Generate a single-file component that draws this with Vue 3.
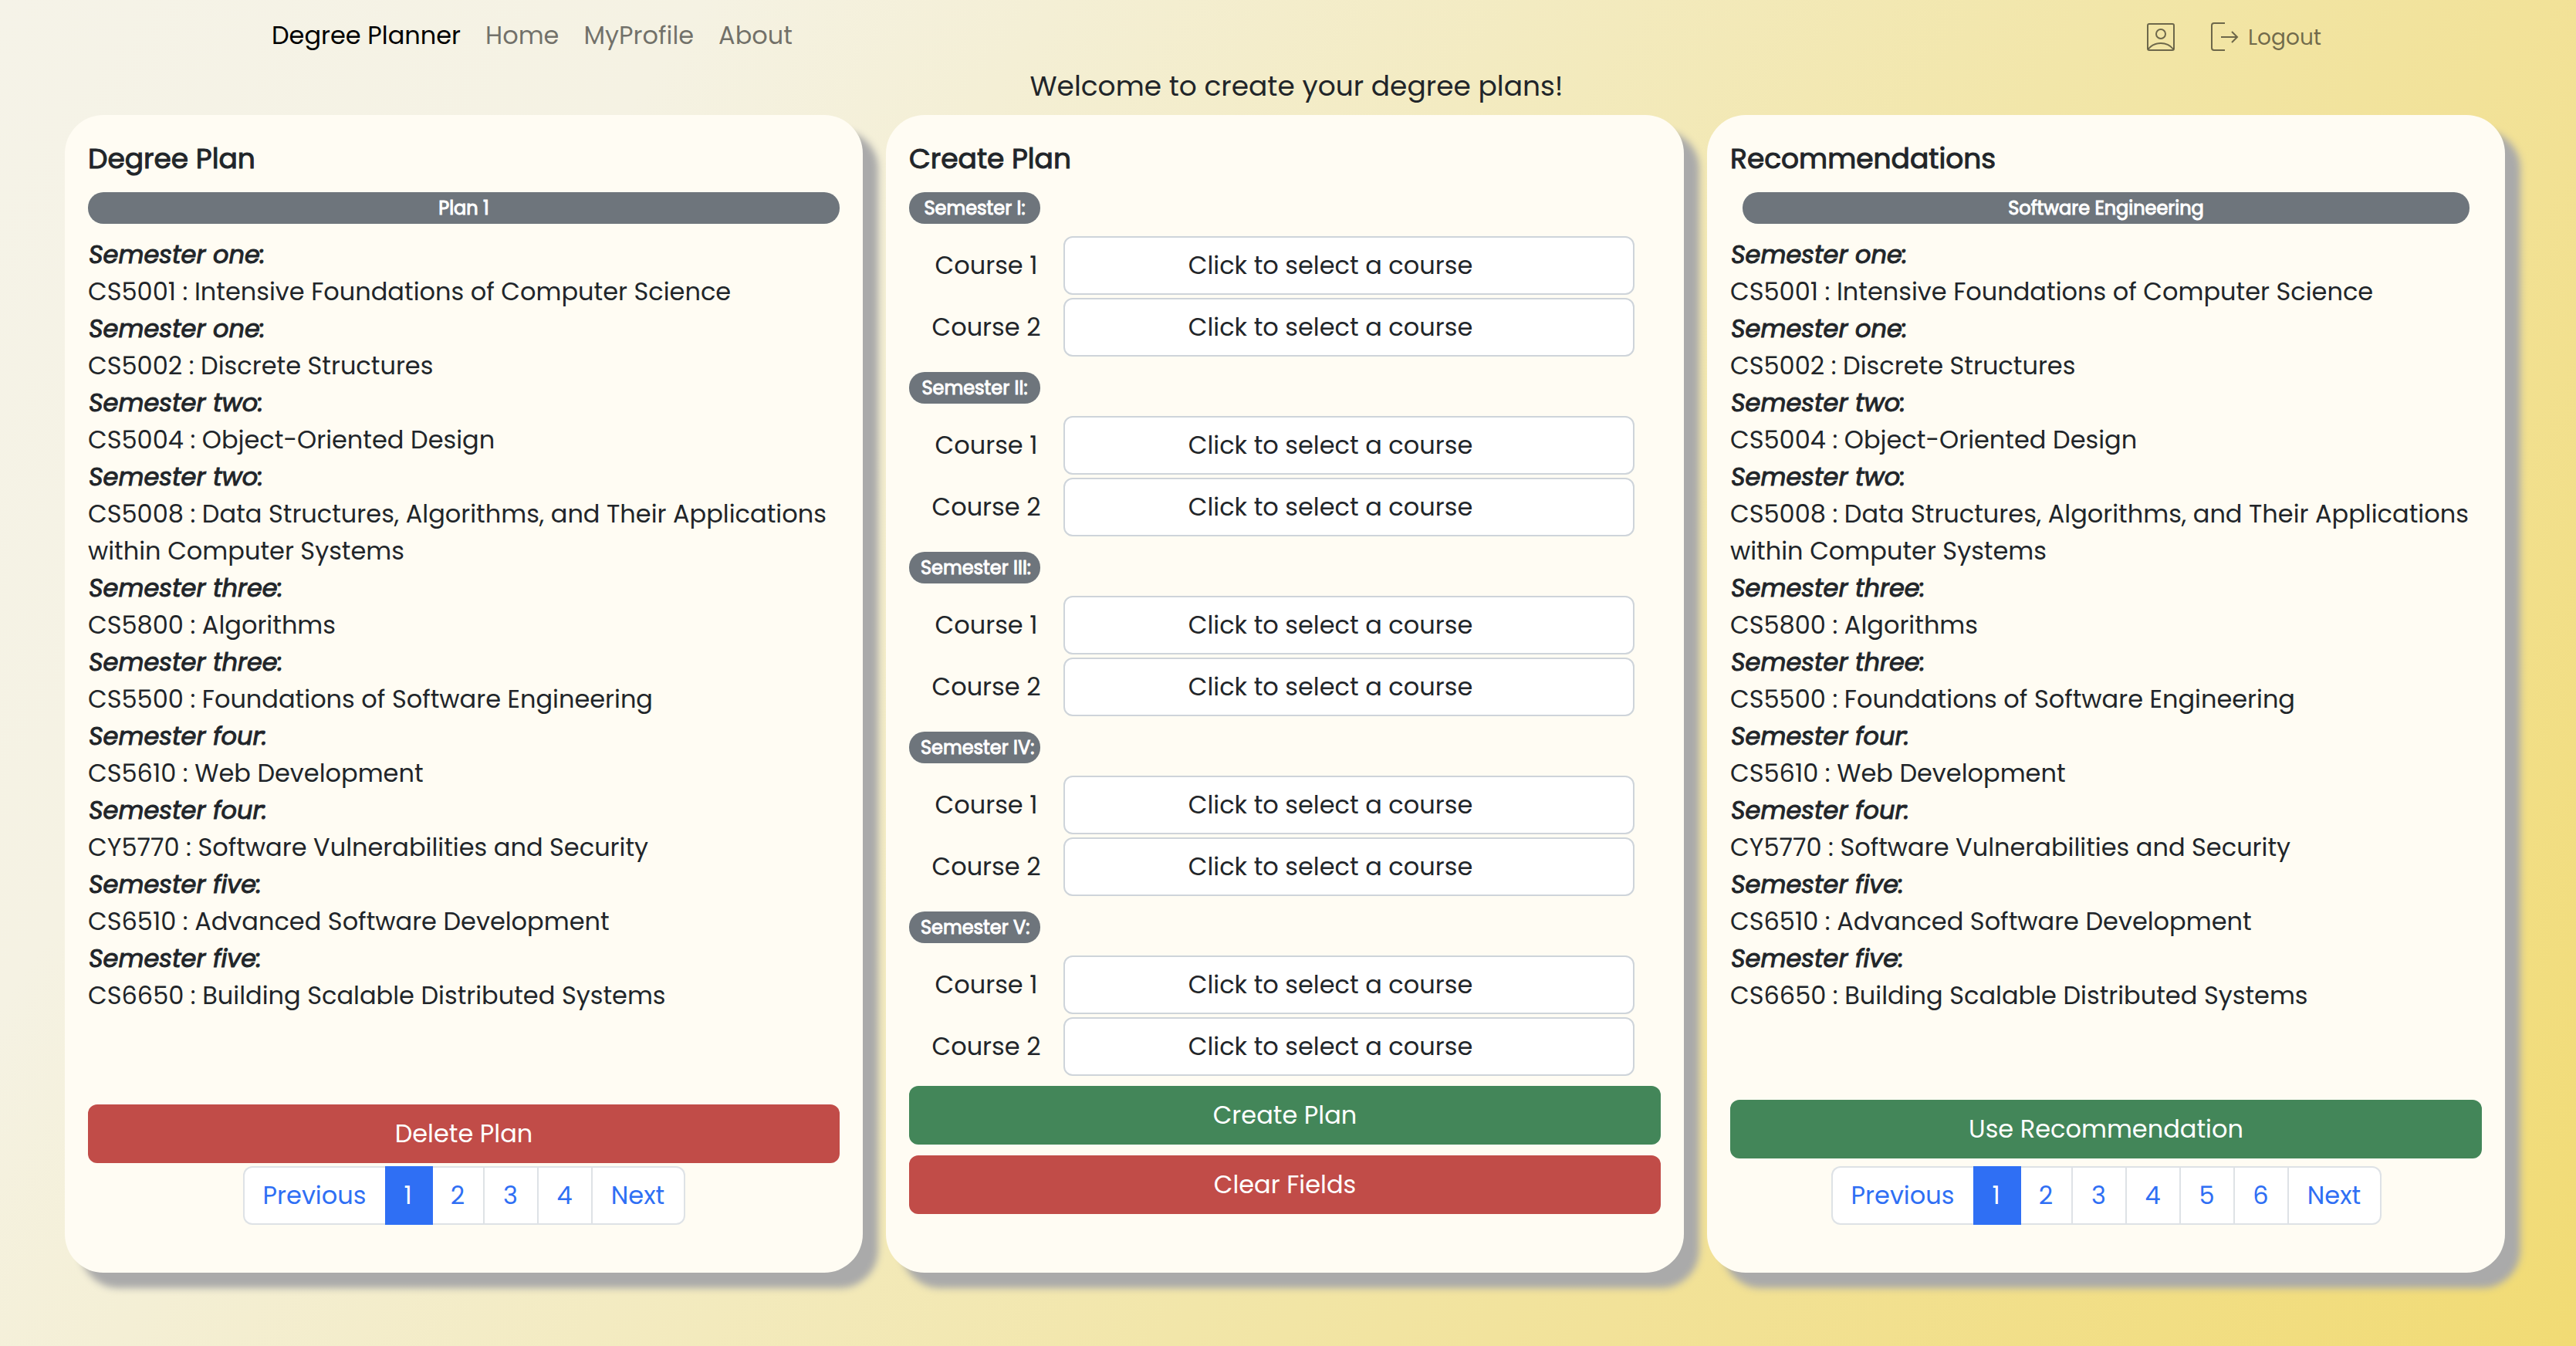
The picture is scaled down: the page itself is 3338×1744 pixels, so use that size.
<script setup>
import { ref } from 'vue'

const courses = [
  { term: 'one', code: 'CS5001', name: 'Intensive Foundations of Computer Science' },
  { term: 'one', code: 'CS5002', name: 'Discrete Structures' },
  { term: 'two', code: 'CS5004', name: 'Object-Oriented Design' },
  { term: 'two', code: 'CS5008', name: 'Data Structures, Algorithms, and Their Applications within Computer Systems' },
  { term: 'three', code: 'CS5800', name: 'Algorithms' },
  { term: 'three', code: 'CS5500', name: 'Foundations of Software Engineering' },
  { term: 'four', code: 'CS5610', name: 'Web Development' },
  { term: 'four', code: 'CY5770', name: 'Software Vulnerabilities and Security' },
  { term: 'five', code: 'CS6510', name: 'Advanced Software Development' },
  { term: 'five', code: 'CS6650', name: 'Building Scalable Distributed Systems' },
]

const semesters = ['I', 'II', 'III', 'IV', 'V']
const planPage = ref(1)
const recommendationPage = ref(1)
</script>

<template>
  <div class="page">
    <header class="top">
      <nav class="navbar" aria-label="Main">
        <div class="links">
          <a class="brand" href="#">Degree Planner</a>
          <a href="#">Home</a>
          <a href="#">MyProfile</a>
          <a href="#">About</a>
        </div>
        <div class="account">
          <a href="#" aria-label="Profile">
            <svg width="36" height="36" viewBox="0 0 36 36" fill="none" stroke="currentColor" stroke-width="2">
              <rect x="1" y="1" width="34" height="34" rx="2" />
              <circle cx="18" cy="14" r="6" />
              <path d="M2 33.500C6 28.500 12 26 18 26s12 2.500 16 7.500" />
            </svg>
          </a>
          <a class="logout" href="#">
            <svg width="36" height="38" viewBox="0 0 36 38" fill="none" stroke="currentColor" stroke-width="2">
              <path d="M18 1H4Q1 1 1 4V33Q1 36 4 36H18" />
              <path d="M13 19H34M27 12L34 19L27 26" />
            </svg>
            <span>Logout</span>
          </a>
        </div>
      </nav>
      <p class="welcome">Welcome to create your degree plans!</p>
    </header>

    <main class="cards">
      <section class="card">
        <h2>Degree Plan</h2>
        <div class="badge">Plan 1</div>
        <dl class="courses">
          <template v-for="course in courses" :key="course.code">
            <dt>Semester {{ course.term }}:</dt>
            <dd>{{ course.code }} : {{ course.name }}</dd>
          </template>
        </dl>
        <div class="foot">
          <button class="btn danger" type="button">Delete Plan</button>
          <nav class="pager" aria-label="Plans">
            <button class="prev" type="button">Previous</button>
            <button v-for="n in 4" :key="n" type="button" :class="{ active: n === planPage }" @click="planPage = n">{{ n }}</button>
            <button class="next" type="button">Next</button>
          </nav>
        </div>
      </section>

      <section class="card">
        <h2>Create Plan</h2>
        <form class="form" @submit.prevent>
          <fieldset v-for="s in semesters" :key="s">
            <legend><span class="badge small">Semester {{ s }}:</span></legend>
            <div v-for="n in 2" :key="n" class="field">
              <label :for="`course-${s}-${n}`">Course {{ n }}</label>
              <select :id="`course-${s}-${n}`">
                <option>Click to select a course</option>
                <option v-for="course in courses" :key="course.code">{{ course.code }}</option>
              </select>
            </div>
          </fieldset>
          <div class="actions">
            <button class="btn success" type="submit">Create Plan</button>
            <button class="btn danger" type="reset">Clear Fields</button>
          </div>
        </form>
      </section>

      <section class="card">
        <h2>Recommendations</h2>
        <div class="badge inset">Software Engineering</div>
        <dl class="courses">
          <template v-for="course in courses" :key="course.code">
            <dt>Semester {{ course.term }}:</dt>
            <dd>{{ course.code }} : {{ course.name }}</dd>
          </template>
        </dl>
        <div class="foot loose">
          <button class="btn success" type="button">Use Recommendation</button>
          <nav class="pager" aria-label="Recommendations">
            <button class="prev" type="button">Previous</button>
            <button v-for="n in 6" :key="n" type="button" :class="{ active: n === recommendationPage }" @click="recommendationPage = n">{{ n }}</button>
            <button class="next" type="button">Next</button>
          </nav>
        </div>
      </section>
    </main>
  </div>
</template>

<style>
body {
  margin: 0;
}
</style>

<style scoped>
.page,
.page * {
  box-sizing: border-box;
}

.page {
  min-height: 100vh;
  background: linear-gradient(125deg, #f5f3e8 0%, #f5f2e3 20%, #f4efd5 30%, #f2e6a9 60%, #f2e299 72%, #f1db74 100%);
  color: #212529;
  font-family: Poppins, Inter, sans-serif;
  font-size: 32px;
  line-height: 48px;
}

button,
select {
  font: inherit;
}

a {
  color: inherit;
  text-decoration: none;
}

.top {
  padding-left: 22px;
}

.navbar {
  display: flex;
  align-items: center;
  justify-content: space-between;
  max-width: 2656px;
  height: 88px;
  margin: 0 auto;
  padding-top: 4px;
  color: rgba(0, 0, 0, 0.55);
}

.links {
  display: flex;
  gap: 32px;
}

.brand {
  color: #000;
}

.account {
  display: flex;
  align-items: center;
  gap: 47px;
  padding-top: 6px;
  font-size: 28px;
}

.account a {
  display: flex;
  align-items: center;
  gap: 12px;
}

.account svg {
  margin-bottom: 2px;
}

.welcome {
  margin: 0 0 13px;
  font-size: 36px;
  text-align: center;
}

.cards {
  display: grid;
  grid-template-columns: repeat(3, minmax(0, 1fr));
  gap: 30px;
  padding: 0 92px 95px 84px;
}

.card {
  display: flex;
  flex-direction: column;
  padding: 35px 30px 62px;
  border-radius: 50px;
  background: #fffcf3;
  box-shadow: 20px 20px 10px #aaa;
}

h2 {
  margin: 0 0 21px;
  font-size: 36px;
  font-weight: 400;
  line-height: 44px;
  -webkit-text-stroke: 1px currentColor;
}

.badge {
  border-radius: 20px;
  background: #6e757c;
  color: #fff;
  font-size: 24px;
  line-height: 41px;
  text-align: center;
  -webkit-text-stroke: 1px currentColor;
}

legend {
  padding: 0;
}

.badge.small {
  display: block;
  width: 170px;
  margin-bottom: 16px;
  padding: 0 15px;
  white-space: nowrap;
}

.badge.inset {
  margin: 0 16px;
}

.courses {
  margin: 16px 0 40px;
}

dt {
  padding-left: 1px;
  font-style: italic;
  -webkit-text-stroke: 1px currentColor;
}

dd {
  margin: 0;
}

.form {
  margin: 0 0 14px;
}

fieldset {
  min-width: 0;
  margin: 0 0 20px;
  padding: 0;
  border: 0;
}

fieldset:last-of-type {
  margin-bottom: 13px;
}

.field {
  display: flex;
  align-items: center;
  padding-right: 34px;
}

.field + .field {
  margin-top: 4px;
}

label {
  width: 200px;
  text-align: center;
}

select {
  flex: 1;
  min-width: 0;
  height: 76px;
  padding: 0 72px 0 24px;
  border: 2px solid #ced4da;
  border-radius: 12px;
  background: #fff;
  color: #212529;
  text-align: center;
  appearance: none;
}

.actions {
  display: grid;
  gap: 14px;
}

.btn {
  width: 100%;
  height: 76px;
  border: 0;
  border-radius: 12px;
  color: #fff;
}

.danger {
  background: #c14c48;
}

.success {
  background: #438659;
}

.foot {
  display: grid;
  gap: 4px;
  margin-top: auto;
}

.foot.loose {
  gap: 10px;
}

.pager {
  display: flex;
  justify-content: center;
}

.pager button {
  width: 70px;
  height: 76px;
  padding: 0;
  border: 2px solid #dee2e6;
  border-left-width: 0;
  background: #fff;
  color: #2f6ff4;
}

.pager .prev {
  width: 184px;
  border-left-width: 2px;
  border-right-width: 0;
  border-radius: 12px 0 0 12px;
}

.pager .next {
  width: 120px;
  border-radius: 0 12px 12px 0;
}

.pager .active {
  width: 62px;
  border-color: #2f6ff4;
  background: #2f6ff4;
  color: #fff;
}

.pager .active + button {
  width: 67px;
}
</style>
